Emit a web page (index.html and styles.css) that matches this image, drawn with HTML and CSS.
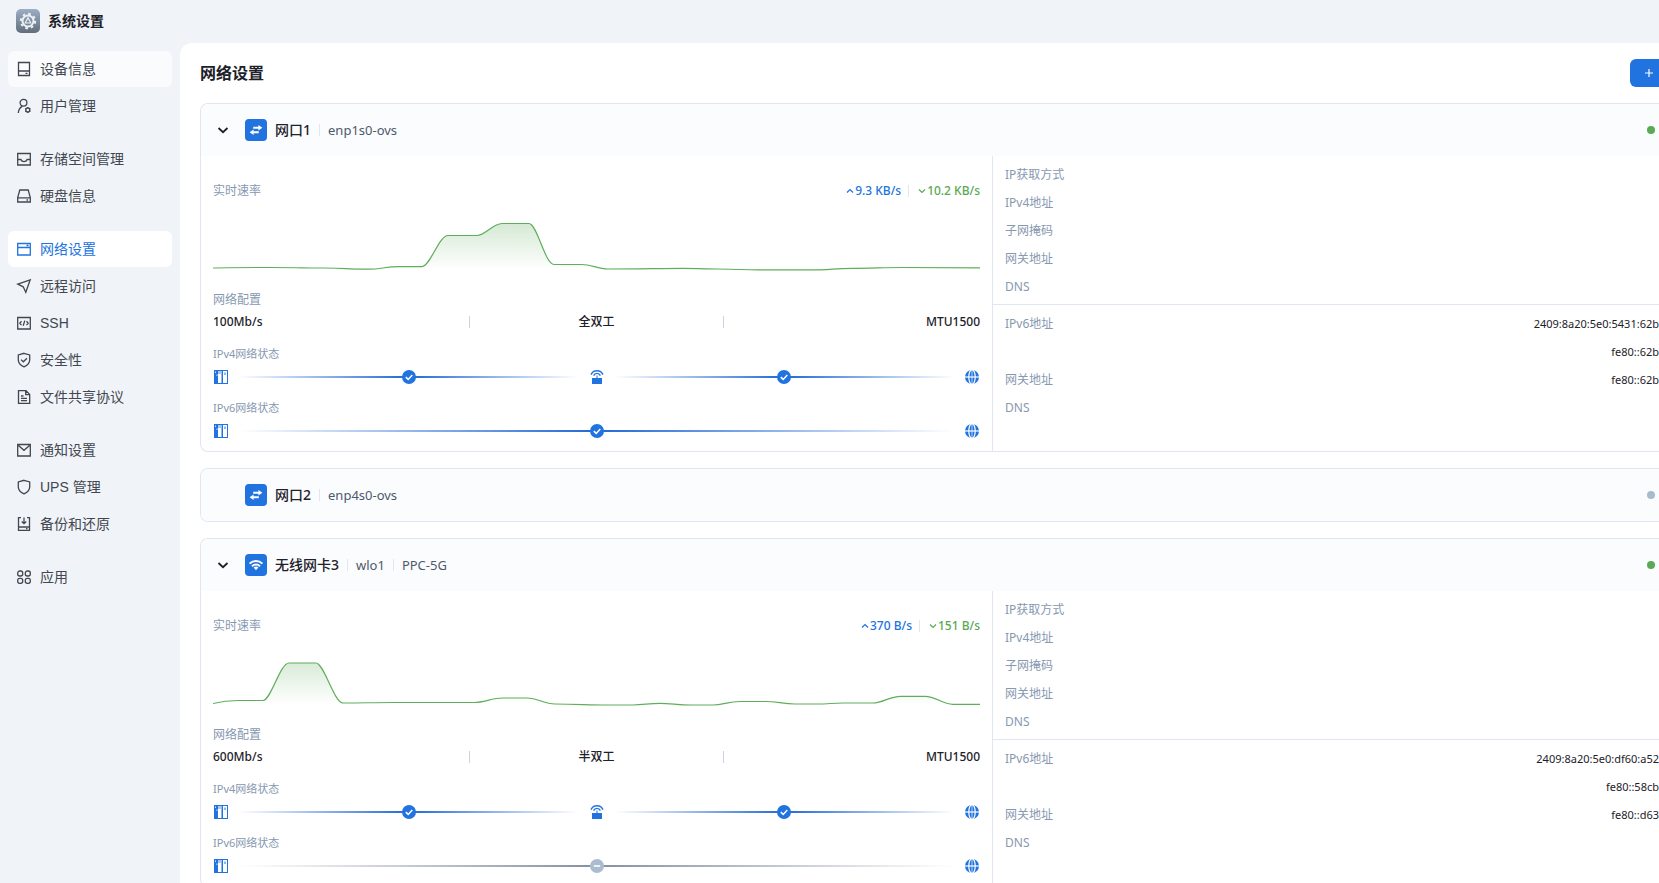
FILE: index.html
```html
<!DOCTYPE html>
<html lang="zh-CN">
<head>
    <meta charset="UTF-8">
    <meta name="viewport" content="width=device-width, initial-scale=1.0">
    <title>系统设置</title>
    <link rel="stylesheet" href="styles.css">
</head>
<body>
    <!-- 共用图标 -->
    <svg class="sprite" aria-hidden="true">
        <symbol id="i-swap" viewBox="0 0 22 22">
            <path d="M8.200 8.700h6M7.800 13.300h6" fill="none" stroke="#fff" stroke-width="2"/>
            <path d="M13.400 6 17.400 8.700l-4 2.700zM8.600 10.600 4.600 13.300l4 2.700z" fill="#fff"/>
        </symbol>
        <symbol id="i-wifi" viewBox="0 0 22 22">
            <path d="M4.600 9.600a9.200 9.200 0 0 1 12.800 0M7 12.200a5.800 5.800 0 0 1 8 0" fill="none" stroke="#fff" stroke-width="2"/>
            <path d="M8.600 13.600a3.600 3.600 0 0 1 4.800 0L11 16.200z" fill="#fff"/>
        </symbol>
        <symbol id="i-chevron" viewBox="0 0 12 12">
            <path d="m1.500 4 4.500 4.200L10.500 4" fill="none" stroke="currentColor" stroke-width="1.800"/>
        </symbol>
        <symbol id="i-up" viewBox="0 0 8 8">
            <path d="M1 5.500 4 2.500 7 5.500" fill="none" stroke="currentColor" stroke-width="1.200"/>
        </symbol>
        <symbol id="i-down" viewBox="0 0 8 8">
            <path d="M1 2.500 4 5.500 7 2.500" fill="none" stroke="currentColor" stroke-width="1.200"/>
        </symbol>
        <symbol id="i-nas" viewBox="0 0 16 16">
            <path d="M1 1h14v14H1z" fill="#2173df"/>
            <path d="M5 2h3.500v12H5zM10 2h4v12h-4z" fill="#fff"/>
            <path d="M5 2h3.500v3H5z" fill="#a9c8f3"/>
            <path d="M2 2.500h1v1.500H2zM3.500 5.500h1V7h-1z" fill="#cfe1fa"/>
            <path d="M11.500 3.500h1v2.500h-1z" fill="#2173df"/>
        </symbol>
        <symbol id="i-router" viewBox="0 0 16 16">
            <path d="M2 5.600a6.600 6.600 0 0 1 12 0M4.600 6.600a3.700 3.700 0 0 1 6.800 0" fill="none" stroke="#2173df" stroke-width="1.400"/>
            <path d="M7.500 6.500h1V9H13v6H3V9h4.500z" fill="#2173df"/>
        </symbol>
        <symbol id="i-globe" viewBox="0 0 16 16">
            <circle cx="8" cy="8" r="7" fill="#2173df"/>
            <ellipse cx="8" cy="8" rx="3.200" ry="7.400" fill="none" stroke="#fff" stroke-width="1.200"/>
            <path d="M.5 8h15" stroke="#fff" stroke-width="1.200"/>
            <path d="M8 1v14" stroke="#fff" stroke-width=".7"/>
        </symbol>
        <symbol id="i-ok" viewBox="0 0 16 16">
            <circle cx="8" cy="8" r="7" fill="#2173df"/>
            <path d="M4.800 8.100 7.200 10.400 11.300 6" fill="none" stroke="#fff" stroke-width="1.500"/>
        </symbol>
        <symbol id="i-none" viewBox="0 0 16 16">
            <circle cx="8" cy="8" r="7" fill="#abbbd0"/>
            <path d="M4.800 8h6.400" stroke="#fff" stroke-width="1.600"/>
        </symbol>
        <linearGradient id="area" x1="0" y1="22" x2="0" y2="70" gradientUnits="userSpaceOnUse">
            <stop offset="0" stop-color="#5aa955" stop-opacity=".26"/>
            <stop offset="1" stop-color="#5aa955" stop-opacity="0"/>
        </linearGradient>
    </svg>

    <div class="app">
        <header class="topbar">
            <svg class="logo" viewBox="0 0 24 24">
                <defs>
                    <linearGradient id="logo-bg" x1="0" y1="0" x2="0" y2="1">
                        <stop offset="0" stop-color="#9dafc5"/>
                        <stop offset="1" stop-color="#616d7c"/>
                    </linearGradient>
                </defs>
                <rect width="24" height="24" rx="5" fill="url(#logo-bg)"/>
                <circle cx="12" cy="12" r="7.200" fill="none" stroke="#edf1f5" stroke-width="2" stroke-dasharray="2.600 3.050"/>
                <circle cx="12" cy="12" r="5.500" fill="none" stroke="#edf1f5" stroke-width="2"/>
                <path d="M12 8.800 14.800 14H9.200z" fill="none" stroke="#edf1f5" stroke-width="1.200"/>
            </svg>
            <h1>系统设置</h1>
        </header>

        <div class="layout">
            <nav class="sidebar">
                <div class="group">
                    <a class="item hover" href="#device">
                        <svg viewBox="0 0 16 16"><path d="M2.500 1.500h11v13h-11zM2.500 10h11M9.500 12.300h2"/></svg>设备信息</a>
                    <a class="item" href="#users">
                        <svg viewBox="0 0 16 16"><circle cx="7.500" cy="4.800" r="3.400"/><path d="M2.300 15c.2-3.200 1.500-5.200 3.700-6.600"/><circle cx="11.800" cy="12" r="2"/><path d="M11.800 9v1M11.800 14v1M9.200 10.500l.9.500M13.500 13l.9.500M14.400 10.500l-.9.500M10.100 13l-.9.500"/></svg>用户管理</a>
                </div>
                <div class="group">
                    <a class="item" href="#storage">
                        <svg viewBox="0 0 16 16"><path d="M1.700 2.500h12.600v11.500H1.700zM1.700 8.500h3.200c.5 1.500 1.700 2.200 3.100 2.200s2.600-.7 3.100-2.200h3.200"/></svg>存储空间管理</a>
                    <a class="item" href="#disk">
                        <svg viewBox="0 0 16 16"><path d="M3.800 2h8.400l2.100 7.500V14H1.700V9.500zM1.700 9.800h12.600M10.500 12h1.500"/></svg>硬盘信息</a>
                </div>
                <div class="group">
                    <a class="item active" href="#network">
                        <svg viewBox="0 0 16 16"><path d="M1.700 2.500h12.600v11.500H1.700zM1.700 6.500h12.600M10.500 4.500h2"/></svg>网络设置</a>
                    <a class="item" href="#remote">
                        <svg viewBox="0 0 16 16"><path d="M14.200 1.800 1.800 6.200l5.400 2.600L9.800 14.200z"/></svg>远程访问</a>
                    <a class="item" href="#ssh">
                        <svg viewBox="0 0 16 16"><path d="M1.700 2.500h12.600v11.500H1.700zM5.500 6.300 3.800 8.200l1.700 1.900M10.500 6.300l1.700 1.900-1.700 1.900M8.800 5.600 7.200 10.800"/></svg>SSH</a>
                    <a class="item" href="#security">
                        <svg viewBox="0 0 16 16"><path d="M8 1.300 13.700 3v5c0 3.200-2.600 5.400-5.700 6.800C4.900 13.400 2.300 11.200 2.300 8V3zM5 7.600l2.300 2.200L11 6.200"/></svg>安全性</a>
                    <a class="item" href="#share">
                        <svg viewBox="0 0 16 16"><path d="M2.500 1.700H10l3.700 3.700v8.900H2.500zM9.700 1.700v4h4M5 7h2.500M5 9.300h6M5 11.600h6"/></svg>文件共享协议</a>
                </div>
                <div class="group">
                    <a class="item" href="#notify">
                        <svg viewBox="0 0 16 16"><path d="M1.700 2.500h12.600v11.500H1.700zM2.500 3.500 8 8.300l5.500-4.800"/></svg>通知设置</a>
                    <a class="item" href="#ups">
                        <svg viewBox="0 0 16 16"><path d="M8 1.300 13.700 3v5c0 3.200-2.600 5.400-5.700 6.800C4.900 13.400 2.300 11.200 2.300 8V3z"/></svg>UPS 管理</a>
                    <a class="item" href="#backup">
                        <svg viewBox="0 0 16 16"><path d="M5 1.700H2.500v12.600h11V1.700H11M2.500 11h11M8 1.500v6M5.700 5.500 8 7.700l2.300-2.200M10 12.700h1.500"/></svg>备份和还原</a>
                </div>
                <div class="group">
                    <a class="item" href="#apps">
                        <svg viewBox="0 0 16 16"><rect x="1.700" y="2" width="5" height="5" rx="2"/><rect x="9.300" y="2" width="5" height="5" rx="2"/><rect x="1.700" y="9.300" width="5" height="5" rx="2"/><rect x="9.300" y="9.300" width="5" height="5" rx="2"/></svg>应用</a>
                </div>
            </nav>

            <main class="main">
                <div class="main-head">
                    <h2>网络设置</h2>
                    <button class="add" type="button" aria-label="新增">
                        <svg viewBox="0 0 10 10"><path d="M5 1v8M1 5h8" stroke="#fff" stroke-width="1.200"/></svg>
                    </button>
                </div>

                <section class="card">
                    <div class="card-head">
                        <button class="toggle" type="button" aria-label="收起"><svg><use href="#i-chevron"/></svg></button>
                        <svg class="badge"><use href="#i-swap"/></svg>
                        <span class="name">网口1</span>
                        <span class="sub">enp1s0-ovs</span>
                        <span class="dot on"></span>
                    </div>
                    <div class="card-body">
                        <div class="stats">
                            <div class="rate">
                                <span class="label">实时速率</span>
                                <span class="up"><svg><use href="#i-up"/></svg>9.3 KB/s</span>
                                <span class="down"><svg><use href="#i-down"/></svg>10.2 KB/s</span>
                            </div>
                            <svg class="chart" viewBox="0 0 767 83" preserveAspectRatio="none">
                                <path class="fill" d="M0 68C10 67.500 15 67.500 57 67.500S80 68 110 68 125 69.200 157 69.200C168 69.200 172 66.600 186 66.600H209C217 66.600 226 35.500 235 35.500H264C272 35.500 280 23.500 289 23.500H316C324 23.500 332 64.500 341 64.500H369C378 64.500 385 69 395 69 430 69 445 68.300 470 68.300S515 69.800 545 69.800H608C620 69.800 620 68.300 640 68.300S670 67.500 690 67.500L767 67.800V70H0z"/>
                                <path class="line" d="M0 68C10 67.500 15 67.500 57 67.500S80 68 110 68 125 69.200 157 69.200C168 69.200 172 66.600 186 66.600H209C217 66.600 226 35.500 235 35.500H264C272 35.500 280 23.500 289 23.500H316C324 23.500 332 64.500 341 64.500H369C378 64.500 385 69 395 69 430 69 445 68.300 470 68.300S515 69.800 545 69.800H608C620 69.800 620 68.300 640 68.300S670 67.500 690 67.500L767 67.800"/>
                            </svg>
                            <div class="label">网络配置</div>
                            <div class="config"><span>100Mb/s</span><span>全双工</span><span>MTU1500</span></div>
                            <div class="status-label">IPv4网络状态</div>
                            <div class="hops">
                                <svg><use href="#i-nas"/></svg>
                                <div class="link"><svg><use href="#i-ok"/></svg></div>
                                <svg><use href="#i-router"/></svg>
                                <div class="link"><svg><use href="#i-ok"/></svg></div>
                                <svg><use href="#i-globe"/></svg>
                            </div>
                            <div class="status-label">IPv6网络状态</div>
                            <div class="hops">
                                <svg><use href="#i-nas"/></svg>
                                <div class="link"><svg><use href="#i-ok"/></svg></div>
                                <svg><use href="#i-globe"/></svg>
                            </div>
                        </div>
                        <div class="address">
                            <dl>
                                <dt>IP获取方式</dt><dd></dd>
                                <dt>IPv4地址</dt><dd></dd>
                                <dt>子网掩码</dt><dd></dd>
                                <dt>网关地址</dt><dd></dd>
                                <dt>DNS</dt><dd></dd>
                            </dl>
                            <dl>
                                <dt>IPv6地址</dt><dd>2409:8a20:5e0:5431:62b</dd>
                                <dt></dt><dd>fe80::62b</dd>
                                <dt>网关地址</dt><dd>fe80::62b</dd>
                                <dt>DNS</dt><dd></dd>
                            </dl>
                        </div>
                    </div>
                </section>

                <section class="card">
                    <div class="card-head">
                        <span class="toggle"></span>
                        <svg class="badge"><use href="#i-swap"/></svg>
                        <span class="name">网口2</span>
                        <span class="sub">enp4s0-ovs</span>
                        <span class="dot"></span>
                    </div>
                </section>

                <section class="card">
                    <div class="card-head">
                        <button class="toggle" type="button" aria-label="收起"><svg><use href="#i-chevron"/></svg></button>
                        <svg class="badge"><use href="#i-wifi"/></svg>
                        <span class="name">无线网卡3</span>
                        <span class="sub">wlo1</span>
                        <span class="sub">PPC-5G</span>
                        <span class="dot on"></span>
                    </div>
                    <div class="card-body">
                        <div class="stats">
                            <div class="rate">
                                <span class="label">实时速率</span>
                                <span class="up"><svg><use href="#i-up"/></svg>370 B/s</span>
                                <span class="down"><svg><use href="#i-down"/></svg>151 B/s</span>
                            </div>
                            <svg class="chart" viewBox="0 0 767 83" preserveAspectRatio="none">
                                <path class="fill" d="M0 68.500C8 66.500 14 65.500 25 65.500H50C58 65.500 67 28 76 28H103C111 28 121 68 130 68 150 68 160 67.500 180 67.500H261C272 67.500 278 63 290 63H314C325 63 331 69 342 69 365 69 375 70 395 70H420C430 70 436 68.300 447 68.300S465 70 478 70H500C510 70 515 66.500 527 66.500H553C564 66.500 570 69 582 69H605C615 69 620 68 630 68H660C670 68 676 61.300 688 61.300H712C723 61.300 729 69.300 740 69.300H767V70H0z"/>
                                <path class="line" d="M0 68.500C8 66.500 14 65.500 25 65.500H50C58 65.500 67 28 76 28H103C111 28 121 68 130 68 150 68 160 67.500 180 67.500H261C272 67.500 278 63 290 63H314C325 63 331 69 342 69 365 69 375 70 395 70H420C430 70 436 68.300 447 68.300S465 70 478 70H500C510 70 515 66.500 527 66.500H553C564 66.500 570 69 582 69H605C615 69 620 68 630 68H660C670 68 676 61.300 688 61.300H712C723 61.300 729 69.300 740 69.300H767"/>
                            </svg>
                            <div class="label">网络配置</div>
                            <div class="config"><span>600Mb/s</span><span>半双工</span><span>MTU1500</span></div>
                            <div class="status-label">IPv4网络状态</div>
                            <div class="hops">
                                <svg><use href="#i-nas"/></svg>
                                <div class="link"><svg><use href="#i-ok"/></svg></div>
                                <svg><use href="#i-router"/></svg>
                                <div class="link"><svg><use href="#i-ok"/></svg></div>
                                <svg><use href="#i-globe"/></svg>
                            </div>
                            <div class="status-label">IPv6网络状态</div>
                            <div class="hops">
                                <svg><use href="#i-nas"/></svg>
                                <div class="link off"><svg><use href="#i-none"/></svg></div>
                                <svg><use href="#i-globe"/></svg>
                            </div>
                        </div>
                        <div class="address">
                            <dl>
                                <dt>IP获取方式</dt><dd></dd>
                                <dt>IPv4地址</dt><dd></dd>
                                <dt>子网掩码</dt><dd></dd>
                                <dt>网关地址</dt><dd></dd>
                                <dt>DNS</dt><dd></dd>
                            </dl>
                            <dl>
                                <dt>IPv6地址</dt><dd>2409:8a20:5e0:df60:a52</dd>
                                <dt></dt><dd>fe80::58cb</dd>
                                <dt>网关地址</dt><dd>fe80::d63</dd>
                                <dt>DNS</dt><dd></dd>
                            </dl>
                        </div>
                    </div>
                </section>
            </main>
        </div>
    </div>
</body>
</html>
```

FILE: styles.css
```css
* {
    box-sizing: border-box;
}

body {
    margin: 0;
    font-family: "Noto Sans", "Noto Sans CJK SC", sans-serif;
    font-size: 12px;
    line-height: 18px;
    color: #1d2129;
    background: #f0f4f9;
}

h1, h2, dl, dd {
    margin: 0;
}

button {
    border: 0;
    padding: 0;
    background: none;
    color: inherit;
    cursor: pointer;
}

.sprite {
    position: absolute;
    width: 0;
    height: 0;
}

.app {
    display: flex;
    flex-direction: column;
    height: 100vh;
    overflow: hidden;
}

.topbar {
    display: flex;
    flex: none;
    align-items: center;
    gap: 8px;
    height: 43px;
    padding: 0 16px 1px;
}

.logo {
    width: 24px;
    height: 24px;
}

.topbar h1 {
    font-size: 14px;
    font-weight: 600;
}

.layout {
    display: flex;
    flex: 1;
    min-height: 0;
}

/* 侧边栏 */
.sidebar {
    display: flex;
    flex: none;
    flex-direction: column;
    gap: 17px;
    width: 180px;
    padding: 8px;
    font-family: "Liberation Sans", "Noto Sans CJK SC", sans-serif;
}

.group {
    display: flex;
    flex-direction: column;
    gap: 1px;
}

.item {
    display: flex;
    align-items: center;
    gap: 8px;
    height: 36px;
    padding: 0 8px;
    border-radius: 6px;
    font-size: 14px;
    color: #42474f;
    text-decoration: none;
}

.item svg {
    width: 16px;
    height: 16px;
    fill: none;
    stroke: currentColor;
    stroke-width: 1.3;
}

.item.hover {
    background: #f9fbfd;
}

.item.active {
    background: #fff;
    color: #2173df;
}

/* 主区域 */
.main {
    flex: 1;
    min-width: 0;
    padding-left: 20px;
    overflow: hidden;
    border-top-left-radius: 12px;
    background: #fff;
}

.main-head {
    display: flex;
    align-items: center;
    justify-content: space-between;
    height: 60px;
}

.main-head h2 {
    font-size: 16px;
    font-weight: 600;
}

.add {
    display: flex;
    align-items: center;
    width: 29px;
    height: 28px;
    padding-left: 14px;
    border-radius: 6px 0 0 6px;
    background: #2173df;
}

.add svg {
    width: 10px;
    height: 10px;
}

.card {
    margin-bottom: 16px;
    overflow: hidden;
    border: 1px solid #e1e7f0;
    border-right: 0;
    border-radius: 8px 0 0 8px;
}

.card-head {
    display: flex;
    align-items: center;
    height: 52px;
    padding: 0 4px 0 16px;
    background: #fbfcfe;
    font-size: 14px;
}

.toggle {
    width: 12px;
    height: 12px;
    margin-right: 16px;
}

.toggle svg {
    display: block;
    width: 12px;
    height: 12px;
}

.badge {
    width: 22px;
    height: 22px;
    margin-right: 8px;
    border-radius: 4px;
    background: #2173df;
}

.name {
    font-weight: 500;
}

.sub {
    margin-left: 8px;
    padding-left: 8px;
    border-left: 1px solid #e1e7f0;
    font-size: 13px;
    line-height: 12px;
    color: #4e5969;
}

.dot {
    width: 8px;
    height: 8px;
    margin-left: auto;
    border-radius: 50%;
    background: #a9b9ce;
}

.dot.on {
    background: #5aa955;
}

.card-body {
    display: grid;
    grid-template-columns: 791fr 667fr;
}

.stats {
    min-width: 0;
    padding: 26px 12px 12px;
}

.label,
.address dt {
    color: #8798b1;
}

.rate {
    display: flex;
    align-items: center;
    font-weight: 500;
}

.rate .label {
    margin-right: auto;
    font-weight: 400;
}

.rate svg {
    width: 8px;
    height: 8px;
    margin-right: 1px;
}

.up {
    color: #2173df;
}

.down {
    margin-left: 7px;
    padding-left: 9px;
    border-left: 1px solid #e1e7f0;
    line-height: 12px;
    color: #5aa955;
}

.chart {
    display: block;
    width: 100%;
    height: 83px;
    margin-bottom: 8px;
}

.chart .fill {
    fill: url(#area);
}

.chart .line {
    fill: none;
    stroke: #5fae5b;
    stroke-width: 1.2;
    vector-effect: non-scaling-stroke;
}

.config {
    display: grid;
    grid-template-columns: repeat(3, 1fr);
    align-items: center;
    margin-top: 4px;
    font-weight: 500;
}

.config span:nth-child(2) {
    border: 1px solid #c9d4e3;
    border-width: 0 1px;
    line-height: 12px;
    text-align: center;
}

.config span:nth-child(3) {
    text-align: right;
}

.status-label {
    margin: 15px 0 7px;
    font-size: 11px;
    line-height: 16px;
    color: #8798b1;
}

.hops {
    display: flex;
    align-items: center;
    gap: 10px;
}

.hops svg {
    display: block;
    flex: none;
    width: 16px;
    height: 16px;
}

.link {
    display: flex;
    flex: 1;
    justify-content: center;
    background: linear-gradient(90deg, rgba(33, 104, 214, 0), #2168d6, rgba(33, 104, 214, 0)) center / 100% 2px no-repeat;
}

.link.off {
    background-image: linear-gradient(90deg, rgba(134, 144, 160, 0), #8690a0, rgba(134, 144, 160, 0));
}

.address {
    min-width: 0;
    border-left: 1px solid #e1e7f0;
}

.address dl {
    display: grid;
    grid-template-columns: auto 1fr;
    grid-auto-rows: 28px;
    align-items: center;
    padding: 5px 0 3px 12px;
}

.address dl + dl {
    border-top: 1px solid #e1e7f0;
}

.address dd {
    font-size: 11px;
    text-align: right;
}
```
